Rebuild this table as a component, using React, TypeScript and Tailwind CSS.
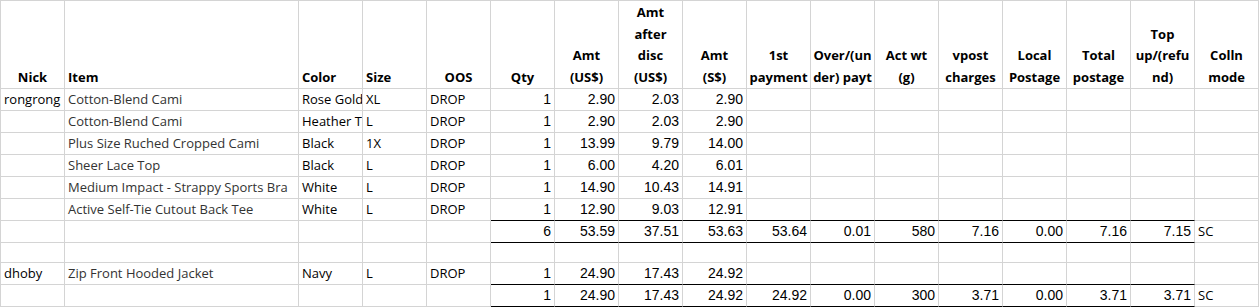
import React from "react";

type Col = { w: string; head: string[]; align: "left" | "center" };

const cols: Col[] = [
  { w: "w-[64px]", head: ["Nick"], align: "center" },
  { w: "w-[234px]", head: ["Item"], align: "left" },
  { w: "w-[64px]", head: ["Color"], align: "left" },
  { w: "w-[64px]", head: ["Size"], align: "left" },
  { w: "w-[64px]", head: ["OOS"], align: "center" },
  { w: "w-[64px]", head: ["Qty"], align: "center" },
  { w: "w-[64px]", head: ["Amt", "(US$)"], align: "center" },
  { w: "w-[64px]", head: ["Amt", "after", "disc", "(US$)"], align: "center" },
  { w: "w-[64px]", head: ["Amt", "(S$)"], align: "center" },
  { w: "w-[64px]", head: ["1st", "payment"], align: "center" },
  { w: "w-[64px]", head: ["Over/(un", "der) payt"], align: "center" },
  { w: "w-[64px]", head: ["Act wt", "(g)"], align: "center" },
  { w: "w-[64px]", head: ["vpost", "charges"], align: "center" },
  { w: "w-[64px]", head: ["Local", "Postage"], align: "center" },
  { w: "w-[64px]", head: ["Total", "postage"], align: "center" },
  { w: "w-[64px]", head: ["Top", "up/(refu", "nd)"], align: "center" },
  { w: "w-[64px]", head: ["Colln", "mode"], align: "center" },
];

type Row = { cells: string[]; h: "h-[22px]" | "h-[20px]"; black?: boolean };

const e = "";
const rows: Row[] = [
  { cells: ["rongrong", "Cotton-Blend Cami", "Rose Gold", "XL", "DROP", "1", "2.90", "2.03", "2.90"], h: "h-[22px]" },
  { cells: [e, "Cotton-Blend Cami", "Heather T", "L", "DROP", "1", "2.90", "2.03", "2.90"], h: "h-[22px]" },
  { cells: [e, "Plus Size Ruched Cropped Cami", "Black", "1X", "DROP", "1", "13.99", "9.79", "14.00"], h: "h-[22px]" },
  { cells: [e, "Sheer Lace Top", "Black", "L", "DROP", "1", "6.00", "4.20", "6.01"], h: "h-[22px]" },
  { cells: [e, "Medium Impact - Strappy Sports Bra", "White", "L", "DROP", "1", "14.90", "10.43", "14.91"], h: "h-[22px]" },
  { cells: [e, "Active Self-Tie Cutout Back Tee", "White", "L", "DROP", "1", "12.90", "9.03", "12.91"], h: "h-[22px]", black: true },
  { cells: [e, e, e, e, e, "6", "53.59", "37.51", "53.63", "53.64", "0.01", "580", "7.16", "0.00", "7.16", "7.15", "SC"], h: "h-[22px]", black: true },
  { cells: [], h: "h-[20px]" },
  { cells: ["dhoby", "Zip Front Hooded Jacket", "Navy", "L", "DROP", "1", "24.90", "17.43", "24.92"], h: "h-[22px]", black: true },
  { cells: [e, e, e, e, e, "1", "24.90", "17.43", "24.92", "24.92", "0.00", "300", "3.71", "0.00", "3.71", "3.71", "SC"], h: "h-[22px]", black: true },
];

const comic = "font-['Open_Sans',sans-serif]";
const num = "font-['Liberation_Sans',Arial,sans-serif]";

function Cell({ col, idx, text, black }: { col: Col; idx: number; text: string; black?: boolean }) {
  const isNum = idx >= 5 && idx <= 15;
  const blackBorder = black && idx >= 5 && idx <= 15;
  return (
    <div
      className={`${col.w} shrink-0 h-full flex items-end overflow-hidden whitespace-nowrap border-r border-r-[#d4d4d4] border-b ${
        blackBorder ? "border-b-black" : "border-b-[#d4d4d4]"
      } ${isNum ? "justify-end pr-[3px]" : "justify-start pl-[3px]"}`}
    >
      <span
        className={`leading-[22px] ${
          isNum ? `${num} text-[14px] text-black` : `${comic} text-[13px] ${idx === 1 ? "text-[#333333]" : "text-black"}`
        }`}
      >
        {text}
      </span>
    </div>
  );
}

export default function App() {
  return (
    <div className="w-[1259px] h-[307px] bg-white overflow-hidden">
      <div className="flex flex-col w-[1259px] border-l border-t border-[#d4d4d4]">
        <div className="flex h-[88px]">
          {cols.map((c, i) => (
            <div
              key={i}
              className={`${c.w} shrink-0 h-full flex flex-col justify-end border-r border-b border-[#d4d4d4] whitespace-nowrap ${
                c.align === "center" ? "items-center text-center" : "items-start pl-[3px]"
              }`}
            >
              {c.head.map((l, j) => (
                <div key={j} className={`${comic} font-bold text-[13px] leading-[21.5px] text-black`}>
                  {l}
                </div>
              ))}
            </div>
          ))}
        </div>
        {rows.map((r, ri) => (
          <div key={ri} className={`flex ${r.h}`}>
            {cols.map((c, ci) => (
              <Cell key={ci} col={c} idx={ci} text={r.cells[ci] ?? ""} black={r.black} />
            ))}
          </div>
        ))}
      </div>
    </div>
  );
}
